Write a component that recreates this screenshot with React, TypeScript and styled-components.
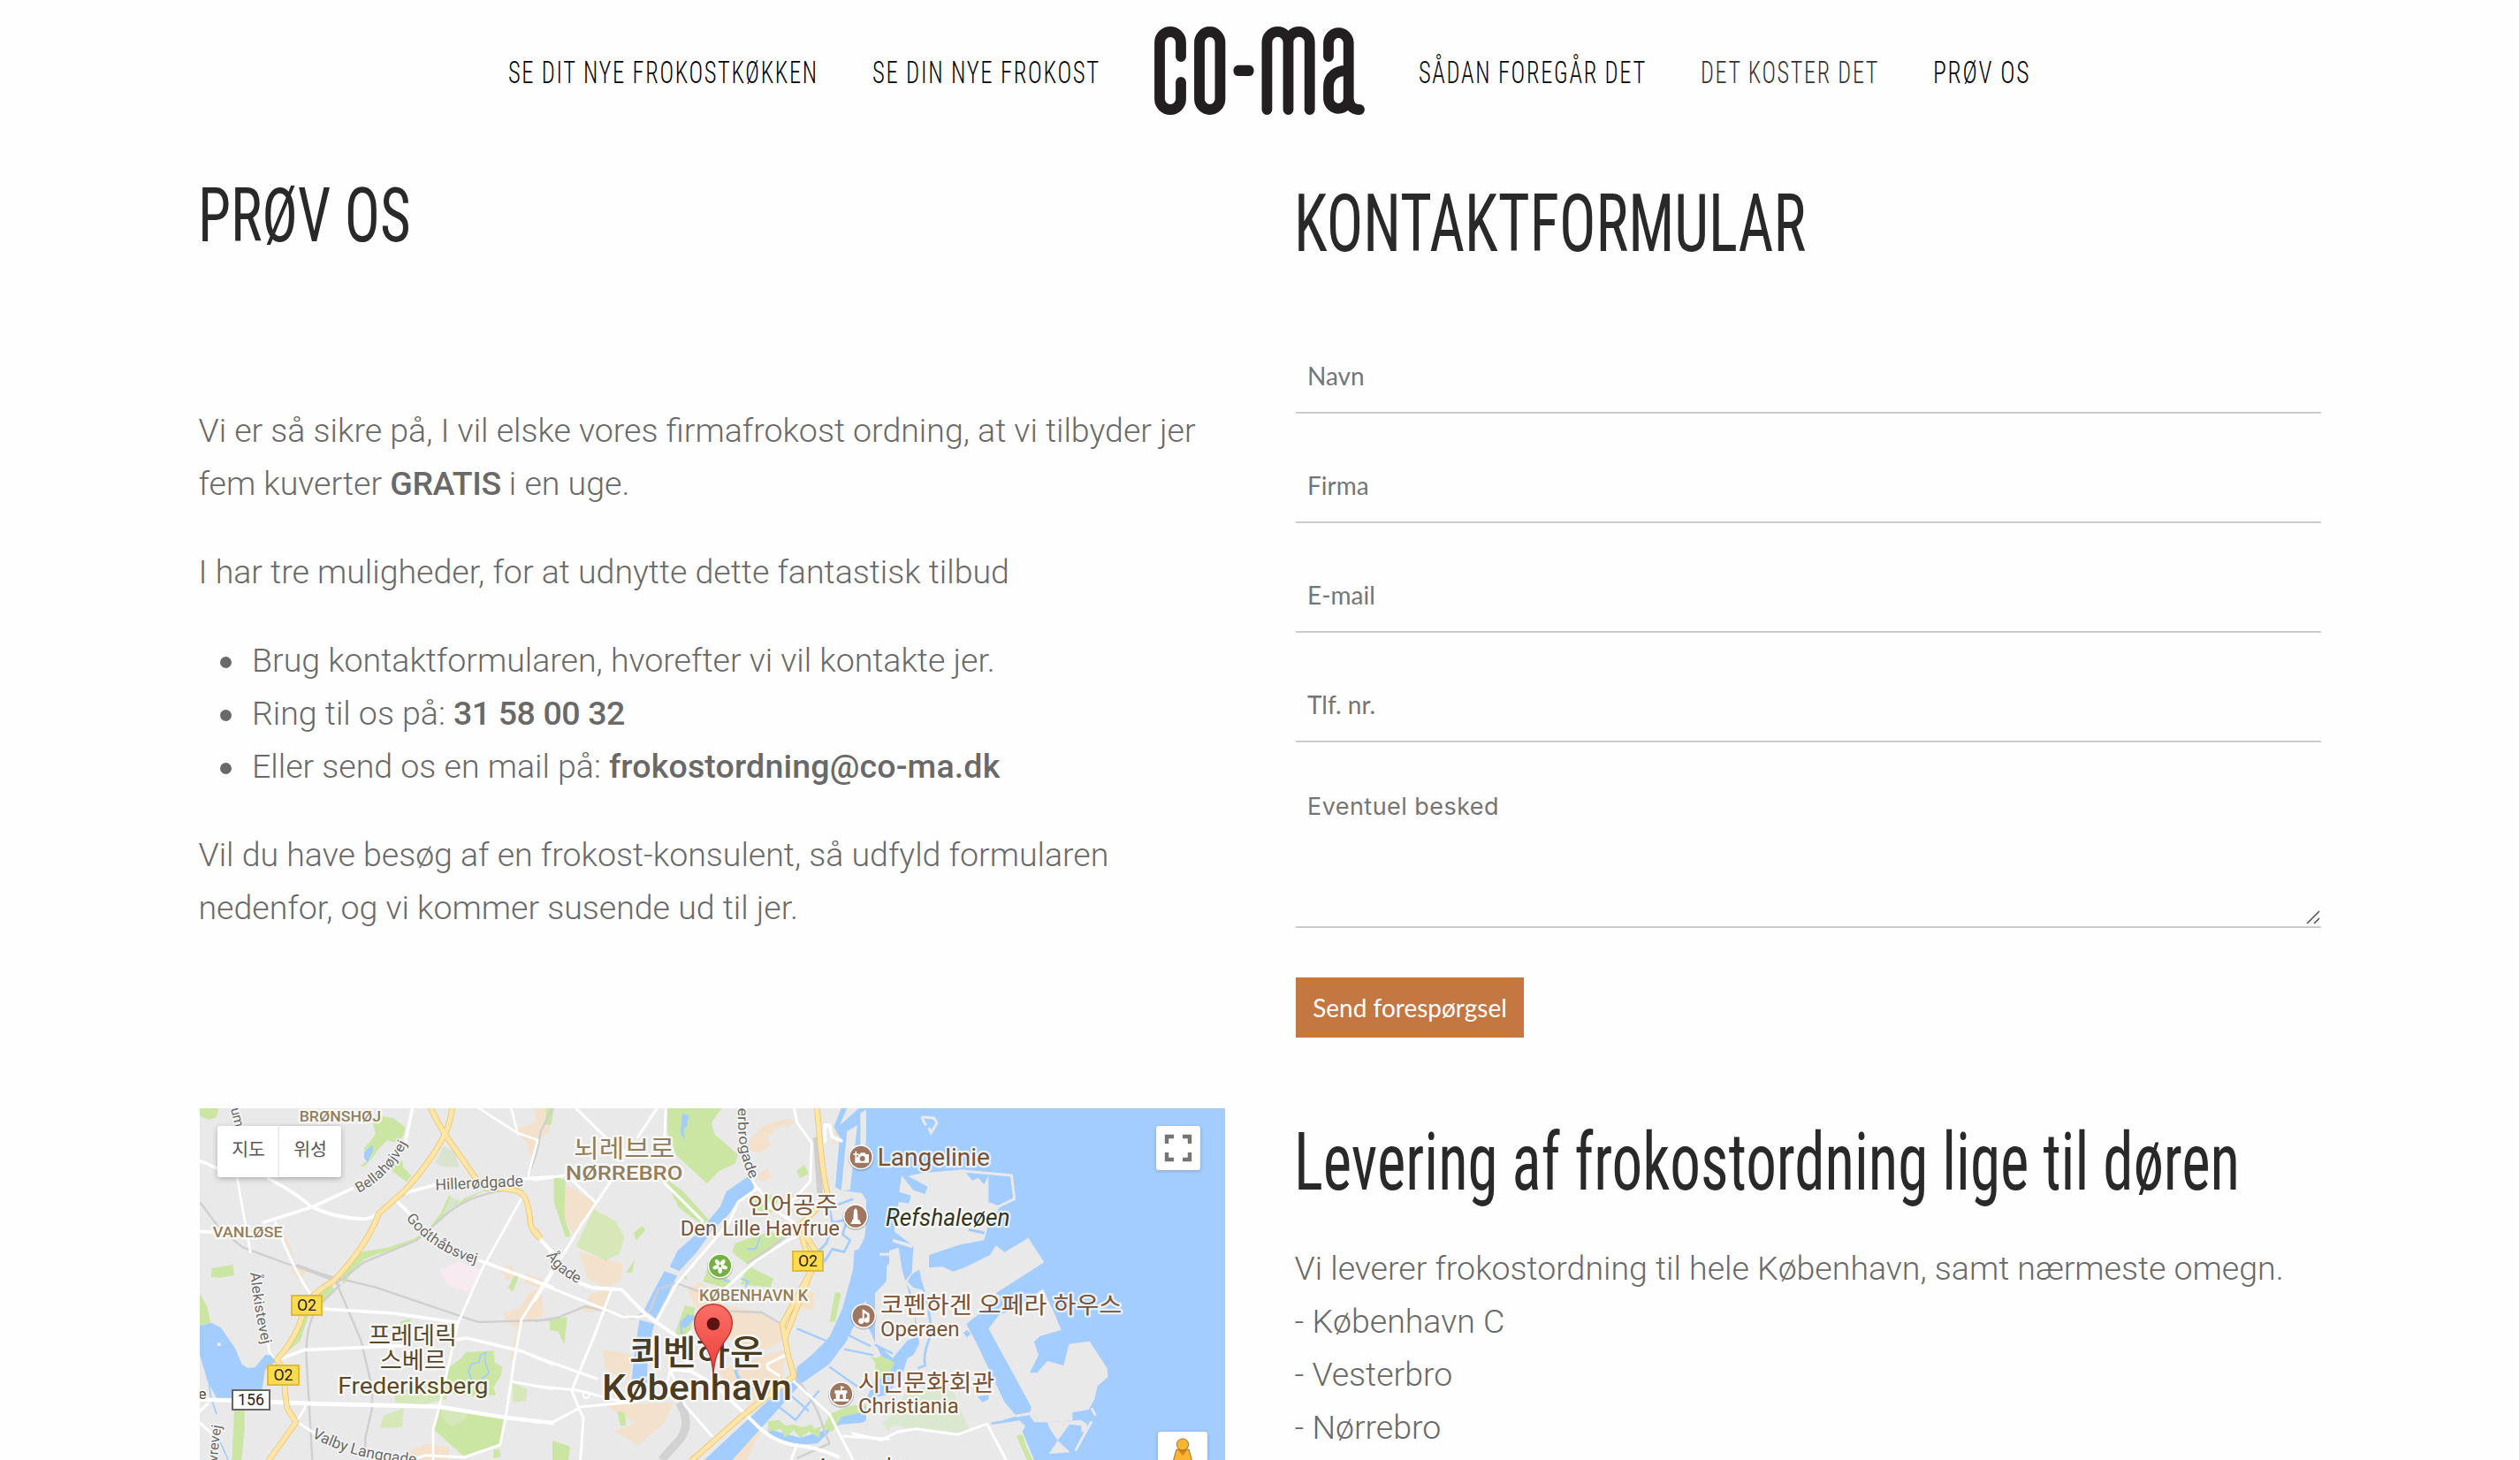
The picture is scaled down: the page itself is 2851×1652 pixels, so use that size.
import React, { useLayoutEffect, useRef, useState } from "react";
import styled, { createGlobalStyle } from "styled-components";

const GlobalStyle = createGlobalStyle`
  * { box-sizing: border-box; }
  body { margin: 0; background: #fefefe; overflow: hidden; }
`;

const Page = styled.div`
  height: 1652px;
  overflow: hidden;
  background: #fefefe;
  border-right: 1px solid #e2e2e2;
  font-family: Roboto, "Noto Sans CJK KR", sans-serif;
  color: #696969;
`;

/* ---------- condensed display text ---------- */

const FitBox = styled.span<{ $w: number }>`
  display: block;
  flex: none;
  width: ${(p) => p.$w}px;
  white-space: nowrap;
`;
const FitInner = styled.span`
  display: inline-block;
  transform-origin: 0 50%;
`;

function Fit({ w, children }: { w: number; children: React.ReactNode }) {
  const ref = useRef<HTMLSpanElement>(null);
  const [scale, setScale] = useState(1);
  useLayoutEffect(() => {
    if (ref.current) setScale(w / ref.current.offsetWidth);
  }, [w]);
  return (
    <FitBox $w={w}>
      <FitInner ref={ref} style={{ transform: `scaleX(${scale})` }}>{children}</FitInner>
    </FitBox>
  );
}

/* ---------- header ---------- */

const Header = styled.header`
  height: 160px;
  padding-left: 575px;
  display: flex;
  align-items: center;
  gap: 61px;
`;
const NavLink = styled.a<{ $muted?: boolean }>`
  font: 350 34.6px/40px Roboto, sans-serif;
  font-stretch: 75%;
  letter-spacing: 2.2px;
  color: ${(p) => (p.$muted ? "#333" : "#000")};
  padding-top: 4px;
`;
const LogoSvg = styled.svg`
  display: block;
  flex: none;
`;

function Logo() {
  return (
    <LogoSvg width="238" height="102" viewBox="1306 29 238 102" fill="none" stroke="#231f20" strokeWidth="11.8" strokeLinecap="round">
      <path d="M1336 64V48A12 12 0 0 0 1312 48V112A12 12 0 0 0 1336 112V93" />
      <path d="M1357 48A11.7 12 0 0 1 1380.4 48V112A11.7 12 0 0 1 1357 112Z" />
      <rect x="1395.5" y="73.8" width="23" height="12.2" rx="5.5" fill="#231f20" stroke="none" />
      <path d="M1433.4 124V48A12 12 0 0 1 1457.5 48V124M1457.5 48A12 12 0 0 1 1481.7 48V124" />
      <path d="M1503 64V48A11.4 12 0 0 1 1525.7 48V112A11.4 12 0 0 1 1503 112V98C1503 86 1512 80 1523 80M1525.7 112Q1527 124 1538 124" />
    </LogoSvg>
  );
}

/* ---------- content ---------- */

const Columns = styled.main`
  display: grid;
  grid-template-columns: 1160px 1160px;
  column-gap: 80px;
  padding-left: 226px;
`;
const Column = styled.section<{ $top: number }>`
  padding-top: ${(p) => p.$top}px;
`;
const Heading = styled.h2<{ $size: number; $top?: number }>`
  margin: ${(p) => p.$top ?? 0}px 0 0 -2px;
  font: 370 ${(p) => p.$size}px/100px Roboto, sans-serif;
  font-stretch: 75%;
  color: #292929;
`;
const Copy = styled.div<{ $top: number }>`
  margin: ${(p) => p.$top}px 0 0 -1.5px;
  font-weight: 300;
  font-size: 37.5px;
  line-height: 60px;
  white-space: nowrap;
`;
const Para = styled.p`
  margin: 0 0 40px;
`;
const Strong = styled.strong<{ $tight?: boolean }>`
  font-weight: 500;
  letter-spacing: ${(p) => (p.$tight ? "-0.4px" : "0.17px")};
`;
const List = styled.ul`
  margin: 0 0 40px;
  padding: 0;
  list-style: none;
`;
const Item = styled.li`
  display: flex;
  align-items: center;
  white-space: pre;
  &::before {
    content: "";
    width: 13px;
    height: 13px;
    margin: 5px 23px 0 24.5px;
    border-radius: 50%;
    background: #696969;
  }
`;

/* ---------- form ---------- */

const Form = styled.form`
  margin-top: 81px;
  display: flex;
  flex-direction: column;
  align-items: flex-start;
`;
const Field = styled.input`
  display: block;
  width: 100%;
  height: 84px;
  margin: 0 0 40px;
  padding: 0 13px;
  border: 0;
  border-bottom: 2px solid #ccc;
  border-radius: 0;
  background: transparent;
  outline: none;
  font: 28px Lato, sans-serif;
  &::placeholder { color: #757575; opacity: 1; }
`;
const MessageWrap = styled.div`
  position: relative;
  width: 100%;
  height: 170px;
`;
const Message = styled.textarea`
  display: block;
  width: 100%;
  height: 170px;
  padding: 16px 13px;
  border: 0;
  border-bottom: 2px solid #ccc;
  background: transparent;
  outline: none;
  resize: none;
  overflow: hidden;
  font: 27px/33px Inter, sans-serif;
  letter-spacing: 0.45px;
  &::placeholder { color: #757575; opacity: 1; }
`;
const Grip = styled.svg`
  position: absolute;
  right: 0;
  bottom: 3px;
`;
const Submit = styled.button`
  width: 258px;
  height: 68px;
  margin-top: 56px;
  padding: 0;
  border: 0;
  background: #c47740;
  color: #fff;
  font: 28px Lato, sans-serif;
`;

/* ---------- map ---------- */

const MapFrame = styled.div`
  position: relative;
  width: 1160px;
  height: 398px;
  margin-top: 197px;
  overflow: hidden;
  background: #e9e9e9;
`;
const MapSvg = styled.svg`
  display: block;
`;
const TypeSwitch = styled.div`
  position: absolute;
  left: 20px;
  top: 20px;
  display: flex;
  height: 58px;
  border-radius: 3px;
  background: #fff;
  box-shadow: 0 2px 6px rgba(0, 0, 0, 0.25);
`;
const TypeButton = styled.span`
  width: 70px;
  line-height: 54px;
  text-align: center;
  font-family: Roboto, "Noto Sans CJK KR", sans-serif;
  font-size: 20.5px;
  color: #565656;
  & + & { box-shadow: -1px 0 2px rgba(0, 0, 0, 0.14); }
`;
const MapControl = styled.div<{ $x: number; $y: number; $w: number }>`
  position: absolute;
  left: ${(p) => p.$x}px;
  top: ${(p) => p.$y}px;
  width: ${(p) => p.$w}px;
  height: ${(p) => p.$w}px;
  border-radius: 3px;
  background: #fff;
  box-shadow: 0 1px 4px rgba(0, 0, 0, 0.2);
`;

const water = "#a3ccff";
const park = "#cbe6a3";
const urban = "#f3e1cb";
const land = "#e9e9e9";

type LabelProps = {
  x: number; y: number; w: number; s: number; c: string;
  weight?: number; italic?: boolean; children: string;
};
function Label({ x, y, w, s, c, weight = 400, italic, children }: LabelProps) {
  return (
    <text x={x} y={y} textLength={w} lengthAdjust="spacingAndGlyphs" fontSize={s} fontWeight={weight}
      fontStyle={italic ? "italic" : undefined} fill={c} stroke="#fff" strokeOpacity="0.72" strokeWidth="14"
      strokeLinejoin="round" paintOrder="stroke">{children}</text>
  );
}
function RoadLabel({ id, d, s, len, children }: { id: string; d: string; s: number; len?: number; children: string }) {
  return (
    <>
      <path id={id} d={d} fill="none" />
      <text fontSize={s} fill="#6a6a6a" stroke="#f4f4f4" strokeWidth="10" strokeLinejoin="round" paintOrder="stroke">
        <textPath href={`#${id}`} textLength={len} lengthAdjust="spacingAndGlyphs">{children}</textPath>
      </text>
    </>
  );
}
function Shield({ x, y, w, plain, children }: { x: number; y: number; w: number; plain?: boolean; children: string }) {
  return (
    <>
      <rect x={x} y={y} width={w} height="66" fill={plain ? "#fff" : "#ffdb4d"} stroke={plain ? "#666" : "#dcbd3a"} strokeWidth="6" />
      <text x={x + w / 2} y={y + 52} fontSize="53" textAnchor="middle" fill="#222">{children}</text>
    </>
  );
}
function Poi({ x, y, c = "#9f765f", children }: { x: number; y: number; c?: string; children: React.ReactNode }) {
  return (
    <g transform={`translate(${x} ${y})`}>
      <circle r="44" cy="3" fill="#000" opacity="0.18" />
      <circle r="42" fill="#fff" />
      <circle r="37.5" fill={c} />
      {children}
    </g>
  );
}

const A = "translate(225 1250) scale(.33333)";
const B = "translate(605 1250) scale(.33333)";
const C = "translate(990 1250) scale(.33333)";

function CityMap() {
  return (
    <MapSvg width="1160" height="398" viewBox="226 1254 1160 398" fontFamily='Roboto, "Noto Sans CJK KR", sans-serif'>
      <rect x="226" y="1254" width="1160" height="398" fill={land} />

      {/* areas, west */}
      <g transform={A}>
        <path fill={water} d="M3 750L42 740L75 757L125 830L145 880L165 893L190 892L225 850L255 850L262 870L225 900L215 960V995H60L30 940L3 850Z" />
        <rect x="63" y="808" width="11" height="11" fill="#eef" />
        <path stroke={water} strokeWidth="5" fill="none" d="M25 870L40 990L60 1050M70 1140L100 1206" />
        <g fill={park}>
          <path d="M3 640L28 685L40 740L3 750ZM3 12H68L60 42L35 50L3 38ZM45 555L115 543L120 578L72 588L40 584Z" />
          <path d="M600 35L660 45L700 75L695 105L670 130L640 120L610 150L590 180L560 210L545 208L575 190L560 150L600 100L590 60Z" />
          <path d="M660 205L690 190L695 215L722 240L705 262L655 225Z" />
          <path d="M975 288L900 318L840 370L800 410L750 455L690 480L600 510L560 525L520 570L490 610L480 570L550 500L640 485L730 455L780 420L820 370L850 305L860 320L885 325L870 345Z" />
          <path d="M380 650L450 610L462 635L410 680L370 720L345 800L310 830L275 850L320 790L345 720Z" />
          <path d="M120 1035L155 1030V1100L145 1206H112Z" />
          <path d="M890 860L905 840L1000 835L1005 875L1030 890L1025 920L1000 960L1010 985L950 990L870 985L835 960L850 890Z" />
          <path d="M820 1030L1035 1062L1020 1155L930 1190L900 1195L800 1105Z" />
          <path d="M1000 1170H1020L1025 1195L1000 1200ZM1070 580H1088L1065 635L1050 620ZM1150 12H1200V50L1180 68Z" />
          <path d="M685 735L718 725L722 790L680 795Z" />
        </g>
        <g fill="#d6e8ba">
          <path d="M625 1055L695 1030L690 1095L615 1098ZM665 980L760 945L850 930L840 1000L760 1018L665 1010Z" />
          <path d="M1065 945L1115 965L1110 1005L1065 1010ZM820 1030L915 1040L900 1070L860 1093L830 1070Z" />
        </g>
        <path fill="#d8e4cf" d="M830 142L870 160L882 212L830 210L803 198ZM855 312L880 325L840 375L830 370Z" />
        <path fill="#f7eaf0" d="M818 560L880 532L955 560L920 640L840 610Z" />
        <g fill={urban}>
          <path d="M1060 85L1145 60L1155 30L1190 12V90L1150 120L1140 190L1120 160L1110 120Z" />
          <path d="M1035 705L1090 690L1120 640L1160 620L1170 715L1100 740L1070 860L1055 870L1080 760L1040 735Z" />
          <path d="M1025 550L1065 545L1070 580L1045 600ZM1110 570L1180 600L1165 625L1105 605ZM310 560L330 545L362 565L345 600ZM280 405L305 470L325 530L310 500L285 450ZM700 1180L780 1150L850 1165L845 1206H690Z" />
        </g>
        <path fill="none" stroke={water} strokeWidth="5" d="M955 850L975 842L970 870L985 910L960 930L975 950L930 945L915 905L925 880L950 875Z" />
        <path fill={water} d="M562 160L590 135L590 160L572 195L560 180Z" />
      </g>

      {/* areas, centre */}
      <g transform={B}>
        <g fill={urban}>
          <path d="M730 115L780 70L860 45L890 60L820 80L790 110L800 140L760 165L720 150ZM0 12H60L30 60L20 110L0 130Z" />
          <path d="M110 270L200 330L210 360L150 400L145 460L90 370ZM150 500L300 540L290 600L235 620L180 590Z" />
          <path d="M190 640L260 630L245 700L160 705ZM230 830L330 850L320 935L240 900ZM240 1020L380 1015L470 1010L440 1080L350 1155L270 1110L340 1080L290 1050Z" />
          <path d="M520 630L560 600L640 680L760 700L830 750L840 800L790 830L690 820L540 680ZM620 900L700 880L850 830L840 940L730 1020L640 930Z" />
          <path d="M890 620L950 640L945 700L900 690ZM735 1080L770 1100L720 1206H670ZM820 310L880 300L860 350Z" />
          <path d="M770 260L750 245L790 215L805 250ZM1010 80L1030 100L1010 140Z" />
        </g>
        <g fill={park}>
          <path d="M450 12H635L600 60L610 100L640 125L690 170L680 200L625 225L585 268L480 170L450 90Z" />
          <path d="M440 250L500 290L590 390L570 410L490 350Z" />
          <path d="M65 245L105 255L100 380L122 445L105 450L65 330Z" />
          <path d="M165 470L290 500L240 528L150 485ZM335 435L365 412L375 425L345 462ZM50 730L110 720L100 815L80 770L52 765ZM60 1140L120 1160L115 1206H60ZM280 1040L305 1045L310 1090L290 1090Z" />
          <path d="M680 470L800 430L850 450L780 510L720 540L670 500ZM590 550L670 600L640 620L570 600ZM720 545L810 590L800 620L700 610Z" />
          <path d="M510 680L545 690L525 780L475 780ZM1020 635L1040 640L1020 735L1000 738ZM888 225L915 205L930 235L900 250ZM500 580L510 570L520 600ZM40 12H65L55 70L35 65Z" />
          <path d="M730 320L780 300L830 320L800 370L740 355ZM310 570L340 525L330 570Z" />
        </g>
        <path fill="#d6e8b8" d="M200 355L275 395L305 450L285 510L230 525L140 480Z" />

        {/* lakes and harbour */}
        <g fill={water}>
          <path d="M722 245L748 262L740 290L690 325L660 370L600 430L550 500L490 565L458 550L485 495L560 430L630 345L650 295Z" />
          <path d="M440 565L483 580L450 650L410 725L372 695L400 640Z" />
          <path d="M355 730L405 745L385 830L380 950H328L335 870Z" />
          <path d="M500 30L522 35L518 70L505 85L510 120L495 100ZM490 745L520 710L545 725L510 760Z" />
          <path d="M1200 12H1040L1015 75L1035 110L1020 280L1040 290L1110 300L1130 330L1120 450L1100 490L1085 495L1080 560L1045 690L1000 790L940 850L890 890L885 940L840 960L575 1206H670L820 1040L900 950L1000 880L1060 800L1130 650L1200 590Z" />
          <path d="M790 1100L900 1130L970 1110L1040 1085L1110 1080L1200 1030V1000L1130 1020L1050 1050L1010 1070L1000 1110L960 1150L890 1155L800 1130Z" />
        </g>
        <g fill={land}>
          <path d="M1060 90L1095 70L1070 290H1040ZM1105 30L1130 12L1122 160L1105 180ZM1035 70L1100 12H1060Z" />
          <path d="M1130 655L1170 670L1155 720L1200 770V930L1100 850L1060 790L1085 770Z" />
        </g>
        <g fill="none" stroke={water}>
          <path strokeWidth="6" d="M720 490H750L765 450M640 595L660 600M700 590L725 600L715 620M500 780L495 740Q520 710 545 720" />
          <path strokeWidth="8" d="M1080 320L1000 350L1010 400L1060 390L1045 440L1070 460L1050 500L1010 490L985 530L960 500L990 470L1000 440" />
          <path strokeWidth="7" d="M890 760L1010 810M680 900L700 940L740 965M730 870L680 905L690 930M815 1015L885 1070L965 970M850 970L930 1040M1000 790L960 860M1060 780L1140 820M1050 830L1150 850M1000 890L1100 960" />
        </g>
        <path fill={park} d="M790 1075L830 1070L850 1090L880 1085L910 1095L940 1085L950 1100L985 1085L1000 1050L1060 1025L1130 1015L1110 1045L1040 1060L1010 1110L970 1095L965 1130L930 1110L900 1130L880 1105L850 1130L835 1100L795 1110ZM1140 855L1200 870V900L1165 890Z" />
      </g>

      {/* sea and islands, east */}
      <g transform={C}>
        <path fill={water} d="M-30 12H1190V1206H540L500 1110L510 1090L480 1068L395 1080L-30 1080L-30 1000L0 930L20 850L-30 740Z" />
        <g fill={land}>
          <path d="M0 640L38 600L40 545L48 540V495L80 485L92 560L115 640L135 690V790L110 800L60 860L0 810Z" />
          <path d="M90 240L130 290L170 303L178 278L112 242L160 232L300 220L330 258L350 248L370 270L385 240V330L425 345L383 415L370 460L290 475L183 510V553L230 550L265 566L310 550L390 510L410 478L440 500L520 452L574 535L410 640L425 650L310 745L340 800L440 1010L480 1057L395 1082L380 1206H-30V1000L40 985L90 920L110 860L130 850L150 810L140 740L120 630L100 600L125 570L130 480L65 430L80 330L115 335L122 308L82 296Z" />
          <path d="M60 455L130 475L125 487L60 466Z" />
          <path d="M385 760L420 715L480 690L570 625L605 700L632 765L560 785L540 805L555 850L525 910H550L585 870L640 885L658 812L728 803L788 895L790 925L755 955L745 1000L725 1035L670 1045V1072L590 1078L540 1078L525 1055L530 1025Z" />
          <path d="M585 1078L700 1070L720 1085L715 1112L700 1110V1090L660 1085L620 1140L662 1180L590 1185L620 1140L590 1095Z" />
          <path d="M360 1075L490 1070L508 1095L500 1110L540 1206H300Z" />
        </g>
        <path fill="none" stroke={land} strokeWidth="9" d="M158 42L200 45L210 62L190 95L182 78M158 42L172 70M300 225L463 240L473 320L420 345M15 508H48M478 1057L528 1048M735 1075L715 1110L680 1175M735 1030L748 1055" />
        <path fill={water} d="M320 420L372 430L370 440L315 428ZM290 475L300 515L285 490ZM295 540V560L290 550ZM300 775L312 765L325 778L312 790ZM348 990L385 985V1000L365 1010ZM125 575L150 560L165 630L130 620L110 600Z" />
        <path fill="none" stroke={water} strokeWidth="8" d="M155 600Q190 700 190 780Q160 850 170 885L145 895M395 1082L490 1068M0 815L60 845" />
        <path fill={park} d="M0 865L20 852L66 875L50 910L10 935L0 930ZM480 1125L500 1118L515 1165L535 1206H515L500 1170Z" />
        <path fill="#dbe8d0" d="M25 1080L75 1040L100 980L230 940L265 975L320 1105L260 1118L120 1100L60 1085L45 1110Z" />
        <path fill="none" stroke="#fff" strokeWidth="9" d="M-80 1115L20 1138L80 1110L140 1100L280 1120L380 1083L445 1206" />
      </g>

      {/* railways */}
      <g transform={A} fill="none" stroke="#cfcfcf" strokeWidth="7">
        <path d="M3 330L70 420L150 485L300 540L455 585" />
        <path d="M330 545L450 590" strokeWidth="13" />
        <path d="M455 585L600 620L880 715L950 738L1200 730" />
        <path d="M465 600L550 800L588 960V1030L565 1130V1170M480 610L400 690Q360 760 365 860L385 1206" />
        <path d="M470 605L560 535L740 460L820 390Q900 310 1040 290L1110 250Q1150 180 1160 90L1200 12" />
      </g>
      <g transform={B} fill="none" stroke="#cfcfcf">
        <path strokeWidth="7" d="M0 735L80 722L170 685L240 700L330 725L390 700L420 625L480 605L560 635M640 700L770 705L830 740" />
        <path strokeWidth="28" stroke="#d2d2d2" d="M490 1010Q540 1090 480 1150L430 1206" />
        <path strokeWidth="20" d="M955 110L968 300" />
        <path strokeWidth="7" d="M850 450L720 540M890 930Q960 1020 980 1100L1000 1150L890 1200" />
      </g>

      {/* white streets */}
      <g fill="none" stroke="#fff" strokeLinejoin="round" strokeLinecap="round">
        <g transform={A}>
          <path strokeWidth="11" d="M3 190L60 215M235 250Q330 300 380 345Q460 385 560 388Q590 385 608 368M725 12L700 130M3 430L180 440M220 400L390 345L520 285M700 300L800 272L1200 245M675 330L730 385M950 528L1200 620M270 865L360 832L700 818M420 693L660 708L880 740M860 800L910 792L1100 838L1200 880" />
          <path strokeWidth="8" d="M130 250L175 500M260 400Q320 560 380 645M225 760L240 840L265 870M1060 12L1083 100M950 12L1080 95L1150 120L1115 250M1105 300L960 560L880 740L815 1030L795 1100V1206M1065 940L1200 965M360 1015V1030L330 1078" />
          <path strokeWidth="14" d="M3 1000L400 1015L815 1025L1040 1062L1200 1080" />
          <path strokeWidth="9" d="M1200 560L1095 730L1070 870L1040 1070L1022 1155L900 1197L770 1190L720 1206M330 1075L400 1120M3 1080L60 1130M3 1040L30 1015" />
          <path strokeWidth="12" d="M1155 455L1190 490L1200 525" />
        </g>
        <g transform={B}>
          <path strokeWidth="12" d="M15 455L80 520M150 605L200 622L295 628L380 715L480 785L530 905L610 950L740 1075Q800 1140 880 1155Q950 1160 1030 1195" />
          <path strokeWidth="9" d="M445 12L440 120M440 265L570 395M265 250L150 420L60 570L0 665M140 12L270 140L330 170M415 12L350 110M0 255L100 240M115 245L205 330M880 12L890 60L940 130L935 260L870 330M735 250L755 285M755 285L690 330L660 400L480 610L410 740M0 600L300 720H350L380 715M260 630L200 790L125 970L165 1065L155 1206M0 855L210 930M0 955L150 970L300 1010M0 1078H60L160 1025L320 1010L440 985L460 900L530 905" />
          <path strokeWidth="9" d="M760 285L800 350L880 400M640 630L750 530L860 460L905 440M530 770L500 800M460 900L510 1020L610 1135M850 850L790 880V895L830 920M880 940L1000 1050L1080 1206M1200 1135L1050 1125M890 1155L870 1206" />
          <circle cx="175" cy="985" r="11" strokeWidth="6" />
          <path strokeWidth="12" d="M985 70V125M985 70H1000L1010 110L1040 122" />
        </g>
      </g>

      {/* main roads */}
      {[["#e9c46f", 20], ["#ffe6a8", 15]].map(([c, w]) => (
        <g key={c} fill="none" stroke={c as string} strokeWidth={w} strokeLinejoin="round">
          <path transform={A} d="M860 8Q855 60 835 100Q790 190 700 290L610 370Q570 480 460 595Q420 620 385 650L350 720Q325 800 265 865L290 910Q290 980 300 1030L330 1078L235 1210M785 8Q810 60 835 100L940 250L975 285Q1060 280 1095 300Q1120 325 1125 400Q1130 430 1160 455" />
          <path transform={B} d="M958 8L965 90Q975 220 993 300L970 340L900 410L960 510L850 790M905 440L940 560L840 745L860 850L880 920L700 1060L530 1210M0 425L20 455" />
        </g>
      ))}

      {/* labels */}
      <g transform={A}>
        <RoadLabel id="um" d="M108 14L124 80" s={46}>um</RoadLabel>
        <Label x={341} y={57} w={277} s={49} c="#937f5b" weight={500}>BRØNSHØJ</Label>
        <Label x={47} y={451} w={237} s={51} c="#937f5b" weight={500}>VANLØSE</Label>
        <RoadLabel id="bella" d="M542 300Q660 240 722 100" s={48} len={240}>Bellahøjvej</RoadLabel>
        <RoadLabel id="hill" d="M803 290L1103 276" s={53} len={299}>Hillerødgade</RoadLabel>
        <RoadLabel id="godt" d="M702 385Q790 500 948 542" s={50} len={290}>Godthåbsvej</RoadLabel>
        <RoadLabel id="alek" d="M174 570Q188 700 216 820" s={49} len={248}>Ålekistevej</RoadLabel>
        <RoadLabel id="valby" d="M382 1128Q520 1205 745 1222" s={52} len={370}>Valby Langgade</RoadLabel>
        <RoadLabel id="rod" d="M62 1240Q66 1130 84 1055" s={48}>øvrevej</RoadLabel>
        <Label x={-2} y={1000} w={28} s={52} c="#5a4a2c">e</Label>
        <Label x={576} y={812} w={300} s={82} c="#5a4a2c">프레데릭</Label>
        <Label x={614} y={896} w={226} s={82} c="#5a4a2c">스베르</Label>
        <Label x={472} y={982} w={510} s={80} c="#5a4a2c">Frederiksberg</Label>
        <Shield x={315} y={648} w={102}>O2</Shield>
        <Shield x={234} y={885} w={105}>O2</Shield>
        <Shield x={114} y={969} w={126} plain>156</Shield>
      </g>
      <g transform={B}>
        <RoadLabel id="oster" d="M690 10C688 110 696 190 734 256" s={48} len={250}>erbrogade</RoadLabel>
        <RoadLabel id="agade" d="M38 512Q80 580 158 612" s={50} len={146}>Ågade</RoadLabel>
        <Label x={133} y={180} w={342} s={84} c="#937f5b">뇌레브로</Label>
        <Label x={105} y={256} w={397} s={68} c="#937f5b" weight={500}>NØRREBRO</Label>
        <Label x={723} y={370} w={306} s={80} c="#7a5539">인어공주</Label>
        <Label x={494} y={445} w={541} s={72} c="#7a5539">Den Lille Havfrue</Label>
        <Label x={558} y={667} w={370} s={55} c="#937f5b" weight={500}>KØBENHAVN K</Label>
        <Label x={320} y={882} w={456} s={116} c="#4a3c22" weight={500}>쾨벤하운</Label>
        <Label x={228} y={1002} w={645} s={120} c="#4a3c22" weight={500}>København</Label>
        <Shield x={876} y={498} w={102}>O2</Shield>
        <Label x={956} y={1252} w={338} s={72} c="#5a4a2c">Amagerbro</Label>
        <Poi x={629} y={547} c="#76b043">
          {[0, 72, 144, 216, 288].map((a) => (
            <ellipse key={a} cx="0" cy="-15" rx="7" ry="11" fill="#fff" transform={`rotate(${a + 36})`} />
          ))}
        </Poi>
        <Poi x={1107} y={178}>
          <path fill="#fff" d="M-10-10H-4L0-15H13L17-10H27V19H-20V0H-10Z" />
          <circle cx="5" cy="5" r="9" fill="#9f765f" />
          <path stroke="#fff" strokeWidth="5" d="M-26-10H-8M-17-20V0" />
        </Poi>
        <Poi x={1089} y={379}>
          <path fill="#fff" d="M0-28L6-20L8 12H14V19H18V26H-16V19H-12V12H-8L-6-20Z" />
        </Poi>
        <Poi x={1116} y={717}>
          <path fill="#fff" d="M-4-24L20-8V14A9 9 0 1 1 12 5V-4L2-10V16A10 10 0 1 1-4 8Z" />
        </Poi>
        <Poi x={1040} y={982}>
          <path fill="#fff" d="M-2-28L12-23L2-18V-12H20V-2H16V17H26V25H-26V17H-18V-2H-22V-12H-2ZM-5 17H6V6A5 5 0 0 0-5 6Z" fillRule="evenodd" />
        </Poi>
        <defs>
          <linearGradient id="pin" x1="0" y1="0" x2="0" y2="1">
            <stop offset="0" stopColor="#fb6f68" />
            <stop offset="1" stopColor="#ea4036" />
          </linearGradient>
        </defs>
        <path fill="url(#pin)" stroke="#b33430" strokeWidth="4" d="M606 914C602 860 590 835 572 810C550 780 542 765 542 741A64 64 0 0 1 670 741C670 765 662 780 640 810C622 835 610 860 606 914Z" />
        <circle cx="606" cy="744" r="22" fill="#5c1311" />
      </g>
      <g transform={C}>
        <Label x={8} y={206} w={382} s={85} c="#7a5233">Langelinie</Label>
        <Label x={36} y={410} w={422} s={80} c="#33361f" italic>Refshaleøen</Label>
        <Label x={18} y={708} w={820} s={80} c="#7a5233">코펜하겐 오페라 하우스</Label>
        <Label x={18} y={785} w={269} s={73} c="#7a5233">Operaen</Label>
        <Label x={-58} y={972} w={464} s={80} c="#7a5233">시민문화회관</Label>
        <Label x={-57} y={1048} w={341} s={73} c="#7a5233">Christiania</Label>
      </g>
    </MapSvg>
  );
}

const navLeft = [{ t: "SE DIT NYE FROKOSTKØKKEN", w: 351 }, { t: "SE DIN NYE FROKOST", w: 258 }];
const navRight = [{ t: "SÅDAN FOREGÅR DET", w: 258 }, { t: "DET KOSTER DET", w: 202, muted: true }, { t: "PRØV OS", w: 110 }];

export default function App() {
  return (
    <Page>
      <GlobalStyle />
      <Header>
        {navLeft.map((n) => <NavLink key={n.t}><Fit w={n.w}>{n.t}</Fit></NavLink>)}
        <Logo />
        {navRight.map((n) => <NavLink key={n.t} $muted={n.muted}><Fit w={n.w}>{n.t}</Fit></NavLink>)}
      </Header>
      <Columns>
        <Column $top={34}>
          <Heading $size={85.8}><Fit w={241}>PRØV OS</Fit></Heading>
          <Copy $top={163}>
            <Para>Vi er så sikre på, I vil elske vores firmafrokost ordning, at vi tilbyder jer<br />fem kuverter <Strong $tight>GRATIS</Strong> i en uge.</Para>
            <Para>I har tre muligheder, for at udnytte dette fantastisk tilbud</Para>
            <List>
              <Item>Brug kontaktformularen, hvorefter vi vil kontakte jer.</Item>
              <Item>Ring til os på: <Strong $tight>31 58 00 32</Strong></Item>
              <Item>Eller send os en mail på: <Strong>frokostordning@co-ma.dk</Strong></Item>
            </List>
            <Para>Vil du have besøg af en frokost-konsulent, så udfyld formularen<br />nedenfor, og vi kommer susende ud til jer.</Para>
          </Copy>
          <MapFrame>
            <CityMap />
            <TypeSwitch>
              <TypeButton>지도</TypeButton>
              <TypeButton>위성</TypeButton>
            </TypeSwitch>
            <MapControl $x={1082} $y={20} $w={50}>
              <svg width="50" height="50" fill="none" stroke="#757575" strokeWidth="4.4">
                <path d="M12 20V12H20M30 12H38V20M38 30V38H30M20 38H12V30" />
              </svg>
            </MapControl>
            <MapControl $x={1084} $y={366} $w={56}>
              <svg width="56" height="56" fill="#fbb62f" stroke="#7a5a1a" strokeWidth="0.8">
                <path d="M21 20H35L39 34V56H17V34Z" />
                <path d="M23 21L28 27L33 21Z" fill="#e07d20" stroke="none" />
                <circle cx="28" cy="14.5" r="6.6" />
              </svg>
            </MapControl>
          </MapFrame>
        </Column>
        <Column $top={43}>
          <Heading $size={91.4}><Fit w={579}>KONTAKTFORMULAR</Fit></Heading>
          <Form>
            <Field placeholder="Navn" />
            <Field placeholder="Firma" />
            <Field placeholder="E-mail" />
            <Field placeholder="Tlf. nr." />
            <MessageWrap>
              <Message placeholder="Eventuel besked" />
              <Grip width="18" height="18" stroke="#555" strokeWidth="1.6">
                <path d="M2 16L16 2M10 16L16 10" />
              </Grip>
            </MessageWrap>
            <Submit type="button">Send forespørgsel</Submit>
          </Form>
          <Heading $size={91.4} $top={91}><Fit w={1070}>Levering af frokostordning lige til døren</Fit></Heading>
          <Copy $top={40}>
            Vi leverer frokostordning til hele København, samt nærmeste omegn.<br />
            - København C<br />
            - Vesterbro<br />
            - Nørrebro
          </Copy>
        </Column>
      </Columns>
    </Page>
  );
}
